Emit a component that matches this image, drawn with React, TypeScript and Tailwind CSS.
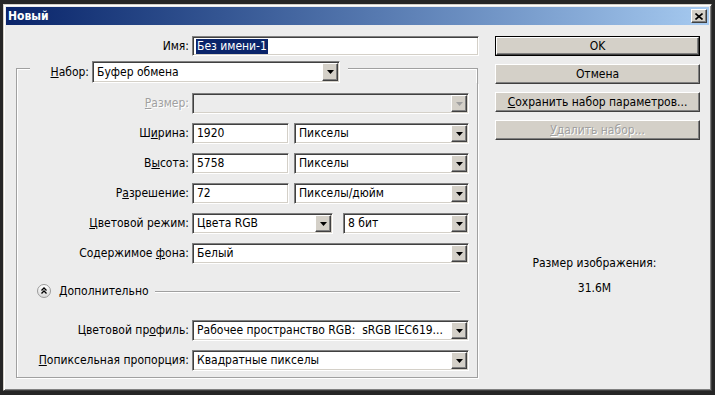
const sunken = "border border-t-[#808080] border-l-[#808080] border-b-white border-r-white shadow-[inset_1px_1px_0_#404040,inset_-1px_-1px_0_#d4d0c8]"
const raised = "border border-t-white border-l-white border-b-[#404040] border-r-[#404040] shadow-[inset_-1px_-1px_0_#808080] bg-[#d4d0c8]"
const etched = "border-[#a0a0a0]"
const grayText = "text-[#a0a0a0] [text-shadow:1px_1px_0_#ffffff]"

function DropBtn({ disabled }: { disabled?: boolean }) {
    return (
        <div className={`w-[16px] h-full flex items-center justify-center ${raised}`}>
            <svg width="7" height="4" viewBox="0 0 7 4">
                <polygon points="0,0 7,0 3.5,4" fill={disabled ? "#a0a0a0" : "#000"} />
            </svg>
        </div>
    )
}

function Combo({ value, width, disabled }: { value?: string, width: string, disabled?: boolean }) {
    return (
        <div className={`flex h-[21px] p-[1px] ${width} ${sunken} ${disabled ? "bg-[#ececec]" : "bg-white"}`}>
            <div className="flex-1 flex items-center pl-[3px] whitespace-pre overflow-hidden text-black">
                {value}
            </div>
            <DropBtn disabled={disabled} />
        </div>
    )
}

function Field({ value, width }: { value: string, width: string }) {
    return (
        <div className={`flex items-center h-[21px] pl-[4px] bg-white text-black ${width} ${sunken}`}>
            {value}
        </div>
    )
}

function Row({ label, children, className }: { label: React.ReactNode, children: React.ReactNode, className?: string }) {
    return (
        <div className={`flex items-center ${className ?? ""}`}>
            <div className="w-[175px] text-right pr-[3px] whitespace-nowrap">{label}</div>
            {children}
        </div>
    )
}

function Btn({ children, isDefault, disabled }: { children: React.ReactNode, isDefault?: boolean, disabled?: boolean }) {
    if (isDefault) {
        return (
            <div className="h-[20px] border border-black">
                <div className={`h-full flex items-center justify-center ${raised}`}>{children}</div>
            </div>
        )
    }
    return (
        <div className={`h-[20px] flex items-center justify-center ${raised} ${disabled ? grayText : ""}`}>
            {children}
        </div>
    )
}

export default function App() {
    return (
        <div className="w-[715px] h-[395px] bg-[#262626] pl-[3px] pt-[4px] font-['DejaVu_Sans_Condensed','DejaVu_Sans',sans-serif] text-[12px] leading-[15px] text-black">
            <div className="w-[709px] h-[387px] flex flex-col border border-t-[#d4d0c8] border-l-[#d4d0c8] border-b-[#404040] border-r-[#404040] shadow-[inset_1px_1px_0_#ffffff,inset_-1px_-1px_0_#808080] p-[2px] bg-[#ececec]">
                {/* title bar */}
                <div className="h-[18px] flex items-center justify-between px-[2px] bg-linear-to-r from-[#0a246a] to-[#a6caf0]">
                    <span className="text-white font-bold">Новый</span>
                    <div className={`w-[16px] h-[14px] flex items-center justify-center ${raised}`}>
                        <svg width="8" height="7" viewBox="0 0 8 7">
                            <path d="M0.5 0.5 L7.5 6.5 M7.5 0.5 L0.5 6.5" stroke="#000" strokeWidth="1.6" />
                        </svg>
                    </div>
                </div>

                <div className="flex-1 flex">
                    {/* left column */}
                    <div className="w-[473px] flex flex-col">
                        <div className="flex items-center mt-[11px]">
                            <div className="w-[186px] text-right pr-[3px]">Имя:</div>
                            <div className={`flex items-center h-[20px] w-[287px] pl-[3px] bg-white ${sunken}`}>
                                <span className="bg-[#0a246a] text-white px-[1px]">Без имени-1</span>
                            </div>
                        </div>

                        <div className="ml-[10px] w-[462px] mt-[5px] flex flex-col">
                            <div className="flex h-[22px]">
                                <div className={`w-[14px] mt-[7px] border-t border-l ${etched} shadow-[inset_1px_1px_0_#fff]`} />
                                <div className="w-[62px] flex items-center justify-end pr-[3px]">
                                    <span><span className="underline">Н</span>абор:</span>
                                </div>
                                <Combo value="Буфер обмена" width="w-[248px] h-[22px]" />
                                <div className={`flex-1 ml-[8px] mt-[7px] border-t border-r ${etched} shadow-[inset_-1px_1px_0_#fff]`} />
                            </div>
                            <div className={`flex flex-col h-[295px] border-l border-r border-b ${etched} shadow-[inset_1px_0_0_#fff,1px_1px_0_#fff] pt-[10px] gap-[9px]`}>
                                <Row label={<span className={grayText}><span className="underline">Р</span>азмер:</span>}>
                                    <Combo width="w-[277px]" disabled />
                                </Row>
                                <Row label={<span>Ш<span className="underline">и</span>рина:</span>}>
                                    <Field value="1920" width="w-[97px]" />
                                    <Combo value="Пикселы" width="w-[175px] ml-[5px]" />
                                </Row>
                                <Row label={<span>В<span className="underline">ы</span>сота:</span>}>
                                    <Field value="5758" width="w-[97px]" />
                                    <Combo value="Пикселы" width="w-[175px] ml-[5px]" />
                                </Row>
                                <Row label={<span>Р<span className="underline">а</span>зрешение:</span>}>
                                    <Field value="72" width="w-[97px]" />
                                    <Combo value="Пикселы/дюйм" width="w-[175px] ml-[5px]" />
                                </Row>
                                <Row label={<span><span className="underline">Ц</span>ветовой режим:</span>}>
                                    <Combo value="Цвета RGB" width="w-[141px]" />
                                    <Combo value="8 бит" width="w-[126px] ml-[10px]" />
                                </Row>
                                <Row label={<span>Содержимое <span className="underline">ф</span>она:</span>}>
                                    <Combo value="Белый" width="w-[277px]" />
                                </Row>

                                <div className="flex items-center h-[14px] mt-[11px] pl-[20px] pr-[17px]">
                                    <svg width="14" height="14" viewBox="0 0 14 14">
                                        <defs>
                                            <linearGradient id="g" x1="0" y1="0" x2="0" y2="1">
                                                <stop offset="0" stopColor="#ffffff" />
                                                <stop offset="1" stopColor="#d8d8d8" />
                                            </linearGradient>
                                        </defs>
                                        <circle cx="7" cy="7" r="6.5" fill="url(#g)" stroke="#9a9a9a" />
                                        <path d="M4.5 6.5 L7 4 L9.5 6.5 M4.5 9.5 L7 7 L9.5 9.5" fill="none" stroke="#000" strokeWidth="1.3" />
                                    </svg>
                                    <span className="ml-[8px]">Дополнительно</span>
                                    <div className="flex-1 ml-[6px] border-t border-[#a0a0a0] shadow-[0_1px_0_#fff]" />
                                </div>

                                <Row label={<span>Цветовой пр<span className="underline">о</span>филь:</span>} className="mt-[13px]">
                                    <Combo value="Рабочее пространство RGB:  sRGB IEC619..." width="w-[277px]" />
                                </Row>
                                <Row label={<span><span className="underline">П</span>опиксельная пропорция:</span>}>
                                    <Combo value="Квадратные пикселы" width="w-[277px]" />
                                </Row>
                            </div>
                        </div>
                    </div>

                    {/* right column */}
                    <div className="w-[205px] ml-[16px] flex flex-col">
                        <div className="flex flex-col gap-[8px] mt-[11px]">
                            <Btn isDefault>OK</Btn>
                            <Btn>Отмена</Btn>
                            <Btn><span><span className="underline">С</span>охранить набор параметров...</span></Btn>
                            <Btn disabled><span><span className="underline">У</span>далить набор...</span></Btn>
                        </div>
                        <div className="mt-[116px] flex flex-col items-center gap-[10px] pr-[6px]">
                            <span>Размер изображения:</span>
                            <span>31.6M</span>
                        </div>
                    </div>
                </div>
            </div>
        </div>
    )
}
